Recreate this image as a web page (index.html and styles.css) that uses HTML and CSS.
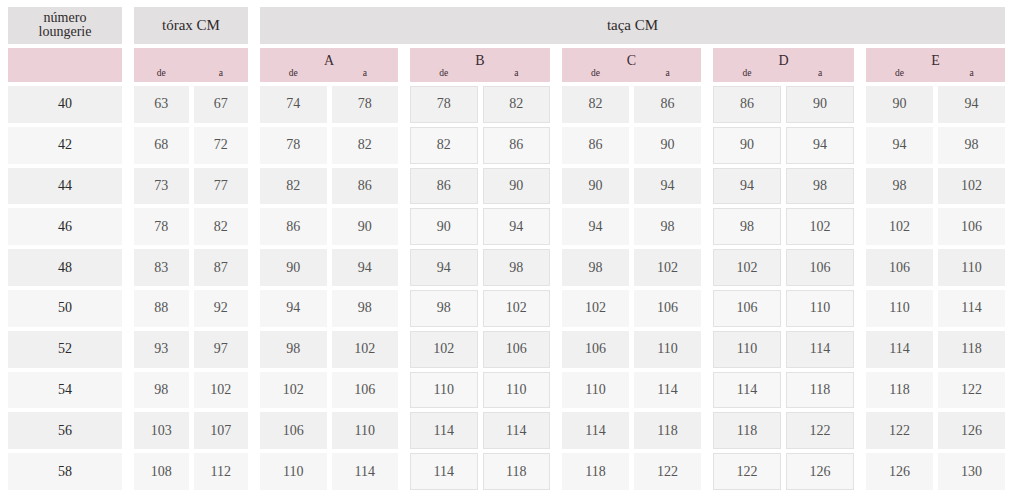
FILE: index.html
```html
<!DOCTYPE html>
<html lang="pt">
<head>
<meta charset="utf-8">
<title>Tabela de medidas</title>
<link rel="stylesheet" href="styles.css">
</head>
<body>
<div class="table">
  <div class="head h-num"><span>número</span><span>loungerie</span></div>
  <div class="head h-torax">tórax CM</div>
  <div class="head h-taca">taça CM</div>

  <div class="pink"></div>
  <div class="pink"><div class="sub"><span>de</span><span>a</span></div></div>
  <div class="pink"><div class="letter">A</div><div class="sub"><span>de</span><span>a</span></div></div>
  <div class="pink"><div class="letter">B</div><div class="sub"><span>de</span><span>a</span></div></div>
  <div class="pink"><div class="letter">C</div><div class="sub"><span>de</span><span>a</span></div></div>
  <div class="pink"><div class="letter">D</div><div class="sub"><span>de</span><span>a</span></div></div>
  <div class="pink"><div class="letter">E</div><div class="sub"><span>de</span><span>a</span></div></div>

  <div class="row dark">
    <div class="num">40</div>
    <div class="pair"><div class="c">63</div><div class="c">67</div></div>
    <div class="pair"><div class="c">74</div><div class="c">78</div></div>
    <div class="pair bd"><div class="c">78</div><div class="c">82</div></div>
    <div class="pair"><div class="c">82</div><div class="c">86</div></div>
    <div class="pair bd"><div class="c">86</div><div class="c">90</div></div>
    <div class="pair"><div class="c">90</div><div class="c">94</div></div>
  </div>
  <div class="row light">
    <div class="num">42</div>
    <div class="pair"><div class="c">68</div><div class="c">72</div></div>
    <div class="pair"><div class="c">78</div><div class="c">82</div></div>
    <div class="pair bd"><div class="c">82</div><div class="c">86</div></div>
    <div class="pair"><div class="c">86</div><div class="c">90</div></div>
    <div class="pair bd"><div class="c">90</div><div class="c">94</div></div>
    <div class="pair"><div class="c">94</div><div class="c">98</div></div>
  </div>
  <div class="row dark">
    <div class="num">44</div>
    <div class="pair"><div class="c">73</div><div class="c">77</div></div>
    <div class="pair"><div class="c">82</div><div class="c">86</div></div>
    <div class="pair bd"><div class="c">86</div><div class="c">90</div></div>
    <div class="pair"><div class="c">90</div><div class="c">94</div></div>
    <div class="pair bd"><div class="c">94</div><div class="c">98</div></div>
    <div class="pair"><div class="c">98</div><div class="c">102</div></div>
  </div>
  <div class="row light">
    <div class="num">46</div>
    <div class="pair"><div class="c">78</div><div class="c">82</div></div>
    <div class="pair"><div class="c">86</div><div class="c">90</div></div>
    <div class="pair bd"><div class="c">90</div><div class="c">94</div></div>
    <div class="pair"><div class="c">94</div><div class="c">98</div></div>
    <div class="pair bd"><div class="c">98</div><div class="c">102</div></div>
    <div class="pair"><div class="c">102</div><div class="c">106</div></div>
  </div>
  <div class="row dark">
    <div class="num">48</div>
    <div class="pair"><div class="c">83</div><div class="c">87</div></div>
    <div class="pair"><div class="c">90</div><div class="c">94</div></div>
    <div class="pair bd"><div class="c">94</div><div class="c">98</div></div>
    <div class="pair"><div class="c">98</div><div class="c">102</div></div>
    <div class="pair bd"><div class="c">102</div><div class="c">106</div></div>
    <div class="pair"><div class="c">106</div><div class="c">110</div></div>
  </div>
  <div class="row light">
    <div class="num">50</div>
    <div class="pair"><div class="c">88</div><div class="c">92</div></div>
    <div class="pair"><div class="c">94</div><div class="c">98</div></div>
    <div class="pair bd"><div class="c">98</div><div class="c">102</div></div>
    <div class="pair"><div class="c">102</div><div class="c">106</div></div>
    <div class="pair bd"><div class="c">106</div><div class="c">110</div></div>
    <div class="pair"><div class="c">110</div><div class="c">114</div></div>
  </div>
  <div class="row dark">
    <div class="num">52</div>
    <div class="pair"><div class="c">93</div><div class="c">97</div></div>
    <div class="pair"><div class="c">98</div><div class="c">102</div></div>
    <div class="pair bd"><div class="c">102</div><div class="c">106</div></div>
    <div class="pair"><div class="c">106</div><div class="c">110</div></div>
    <div class="pair bd"><div class="c">110</div><div class="c">114</div></div>
    <div class="pair"><div class="c">114</div><div class="c">118</div></div>
  </div>
  <div class="row light">
    <div class="num">54</div>
    <div class="pair"><div class="c">98</div><div class="c">102</div></div>
    <div class="pair"><div class="c">102</div><div class="c">106</div></div>
    <div class="pair bd"><div class="c">110</div><div class="c">110</div></div>
    <div class="pair"><div class="c">110</div><div class="c">114</div></div>
    <div class="pair bd"><div class="c">114</div><div class="c">118</div></div>
    <div class="pair"><div class="c">118</div><div class="c">122</div></div>
  </div>
  <div class="row dark">
    <div class="num">56</div>
    <div class="pair"><div class="c">103</div><div class="c">107</div></div>
    <div class="pair"><div class="c">106</div><div class="c">110</div></div>
    <div class="pair bd"><div class="c">114</div><div class="c">114</div></div>
    <div class="pair"><div class="c">114</div><div class="c">118</div></div>
    <div class="pair bd"><div class="c">118</div><div class="c">122</div></div>
    <div class="pair"><div class="c">122</div><div class="c">126</div></div>
  </div>
  <div class="row light">
    <div class="num">58</div>
    <div class="pair"><div class="c">108</div><div class="c">112</div></div>
    <div class="pair"><div class="c">110</div><div class="c">114</div></div>
    <div class="pair bd"><div class="c">114</div><div class="c">118</div></div>
    <div class="pair"><div class="c">118</div><div class="c">122</div></div>
    <div class="pair bd"><div class="c">122</div><div class="c">126</div></div>
    <div class="pair"><div class="c">126</div><div class="c">130</div></div>
  </div>
</div>
</body>
</html>
```
FILE: styles.css
```css
html, body {
  margin: 0;
  padding: 0;
  background: #ffffff;
}
body {
  padding: 7px 8px 0 8px;
  font-family: "Liberation Serif", "DejaVu Serif", serif;
  color: #555;
}
.table {
  display: grid;
  grid-template-columns: 114px 114px 138px 140px 139px 141px 139px;
  grid-template-rows: 37px 34px repeat(10, 36.8px);
  column-gap: 12px;
  row-gap: 4px;
  width: 997px;
}
.head {
  background: #e3e0e1;
  display: flex;
  align-items: center;
  justify-content: center;
  text-align: center;
  color: #2e2a2b;
  font-size: 15px;
}
.h-num {
  flex-direction: column;
  font-size: 14px;
  line-height: 14px;
  padding-bottom: 1px;
  box-sizing: border-box;
}
.h-taca {
  grid-column: 3 / 8;
}
.pink {
  background: #ecd0d8;
  display: flex;
  flex-direction: column;
  justify-content: flex-end;
  color: #3a2b30;
  padding-bottom: 3px;
  box-sizing: border-box;
}
.letter {
  text-align: center;
  font-size: 14px;
  line-height: 14px;
}
.sub {
  display: grid;
  grid-template-columns: 1fr 1fr;
  column-gap: 5px;
  font-size: 9.5px;
  line-height: 11px;
  text-align: center;
}
.row {
  display: contents;
}
.num {
  display: flex;
  align-items: center;
  justify-content: center;
  font-size: 14px;
  color: #2a2a2a;
}
.pair {
  display: grid;
  grid-template-columns: 1fr 1fr;
  column-gap: 5px;
}
.c {
  display: flex;
  align-items: center;
  justify-content: center;
  font-size: 14px;
  color: #555;
  box-sizing: border-box;
}
.dark .num, .dark .c {
  background: #f0f0f0;
}
.light .num, .light .c {
  background: #f6f6f6;
}
.pair.bd .c {
  border: 1px solid #e2e2e2;
}
.dark .pair.bd .c {
  background: #f1f1f1;
}
.light .pair.bd .c {
  background: #f7f7f7;
}
```
